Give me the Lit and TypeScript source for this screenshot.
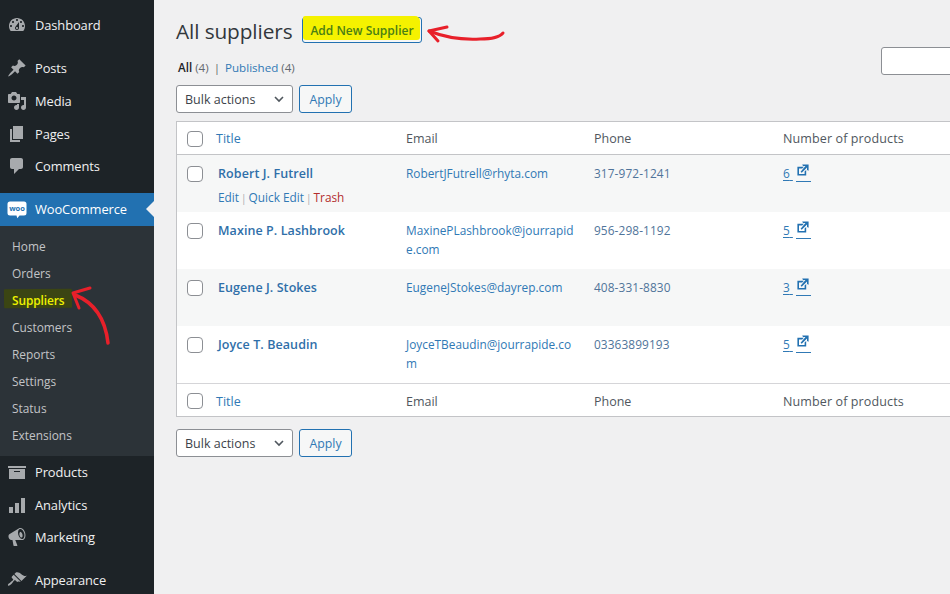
import { LitElement, html, css, svg } from "lit";
import { customElement } from "lit/decorators.js";

const ICONS: Record<string, string> = {
  dashboard: "M3.76 16h12.48c1.1-1.37 1.76-3.11 1.76-5 0-4.42-3.58-8-8-8s-8 3.58-8 8c0 1.89.66 3.63 1.76 5zM10 4c.55 0 1 .45 1 1s-.45 1-1 1-1-.45-1-1 .45-1 1-1zM6 6c.55 0 1 .45 1 1s-.45 1-1 1-1-.45-1-1 .45-1 1-1zm8 0c.55 0 1 .45 1 1s-.45 1-1 1-1-.45-1-1 .45-1 1-1zm-5.37 5.55L12 7v6c0 1.1-.9 2-2 2s-2-.9-2-2c0-.57.24-1.08.63-1.45zM4 10c.55 0 1 .45 1 1s-.45 1-1 1-1-.45-1-1 .45-1 1-1zm12 0c.55 0 1 .45 1 1s-.45 1-1 1-1-.45-1-1 .45-1 1-1zm-5 3c0-.55-.45-1-1-1s-1 .45-1 1 .45 1 1 1 1-.45 1-1z",
  posts: "M10.44 3.02l1.82-1.82 6.36 6.35-1.83 1.82c-1.05-.68-2.48-.57-3.41.36l-.75.75c-.92.93-1.04 2.35-.35 3.41l-1.83 1.82-2.41-2.41-2.8 2.79c-.42.42-3.38 2.71-3.8 2.29s1.86-3.39 2.28-3.81l2.79-2.79L4.1 9.36l1.83-1.82c1.05.69 2.48.57 3.4-.36l.75-.75c.93-.92 1.05-2.35.36-3.41z",
  media: "M13 11V4c0-.55-.45-1-1-1h-1.67L9 1H5L3.67 3H2c-.55 0-1 .45-1 1v7c0 .55.45 1 1 1h10c.55 0 1-.45 1-1zM7 4.5c1.38 0 2.5 1.12 2.5 2.5S8.38 9.5 7 9.5 4.5 8.38 4.5 7 5.62 4.5 7 4.5zM14 6h5v10.5c0 1.38-1.12 2.5-2.5 2.5S14 17.88 14 16.5s1.12-2.5 2.5-2.5c.17 0 .34.02.5.05V9h-3V6zm-4 8.05V13h2v3.5c0 1.38-1.12 2.5-2.5 2.5S7 17.88 7 16.5 8.12 14 9.5 14c.17 0 .34.02.5.05z",
  pages: "M6 15V2h10v13H6zm-1 1h8v2H3V5h2v11z",
  comments: "M5 2h9c1.1 0 2 .9 2 2v7c0 1.1-.9 2-2 2h-2l-5 5v-5H5c-1.1 0-2-.9-2-2V4c0-1.1.9-2 2-2z",
  products: "M19 4v2H1V4h18zM2 7h16v10H2V7zm11 3V9H7v1h6z",
  analytics: "M18 3v15h-4V3h4zm-6 5v10H8V8h4zM6 12v6H2v-6h4z",
  marketing: "M18.15 5.94c.46 1.62.38 3.22-.02 4.48-.42 1.28-1.26 2.18-2.3 2.48-.16.06-.26.06-.4.06-.06.02-.12.02-.18.02-.06.02-.14.02-.22.02h-6.8l2.22 5.5c.02.14-.06.26-.14.34-.08.1-.24.16-.34.16H6.95c-.1 0-.26-.06-.34-.16-.08-.08-.16-.2-.14-.34l-1-5.5H4.25l-.02-.02c-.5.06-1.08-.18-1.54-.62s-.88-1.08-1.06-1.88c-.24-.8-.2-1.56-.02-2.2.18-.62.58-1.08 1.06-1.3l.02-.02 9-5.4c.1-.06.18-.1.24-.16.06-.04.14-.08.24-.12.16-.08.28-.12.5-.18 1.04-.3 2.24.1 3.24.98s1.84 2.24 2.24 3.86zm-2.58 5.98h-.02c.4-.1.74-.34 1.04-.7.58-.7.86-1.76.86-3.04-.02-.64-.1-1.3-.28-1.98-.34-1.36-1.02-2.5-1.78-3.24s-1.68-1.1-2.46-.88c-.82.22-1.4.96-1.7 2-.32 1.04-.28 2.36.06 3.72.38 1.36 1 2.5 1.8 3.24.78.74 1.62 1.1 2.48.88zm-2.54-7.08c.22-.04.42-.02.62.04.38.16.76.48 1.12 1s.64 1.14.76 1.84c.14.7.1 1.34-.04 1.86-.14.5-.42.9-.88 1-.44.12-.9-.08-1.3-.56-.4-.46-.7-1.14-.86-1.96-.16-.8-.14-1.54.02-2.08.18-.56.48-.96.96-1.14z",
  appearance: "M14.48 11.06L7.41 3.99l1.5-1.5c.5-.56 2.3-.47 3.51.32 1.21.8 1.43 1.28 2.91 2.1 1.18.64 2.45 1.26 4.45.85zm-.71.71L6.7 4.7 4.93 6.47c-.39.39-.39 1.02 0 1.41l1.06 1.06c.39.39.39 1.03 0 1.42-.6.6-1.43 1.11-2.21 1.69-.35.26-.7.53-1.01.84C1.43 13.23.4 14.75 1.09 15.44c.69.7 2.21-.33 3.55-1.67.31-.31.58-.66.84-1.01.58-.78 1.09-1.61 1.69-2.21.39-.39 1.02-.39 1.41 0l1.06 1.06c.39.39 1.02.39 1.41 0z",
};

const icon = (k: string) => html`<svg class="ic" viewBox="0 0 20 20">${svg`<path d=${ICONS[k]} fill="currentColor"/>`}</svg>`;

const ext = html`<span class="extl"><svg class="ext" viewBox="0 0 20 20"><path fill="currentColor" d="M9 3h8v8l-2-1V6.92l-6.6 6.59-1.41-1.41L13.08 5H10zm3 12v-3l2-2v7H3V6h8L9 8H5v7h7z"/></svg></span>`;

interface Row { name: string; email: string; phone: string; n: number; actions?: boolean }
const ROWS: Row[] = [
  { name: "Robert J. Futrell", email: "RobertJFutrell@rhyta.com", phone: "317-972-1241", n: 6, actions: true },
  { name: "Maxine P. Lashbrook", email: "MaxinePLashbrook@jourrapide.com", phone: "956-298-1192", n: 5 },
  { name: "Eugene J. Stokes", email: "EugeneJStokes@dayrep.com", phone: "408-331-8830", n: 3 },
  { name: "Joyce T. Beaudin", email: "JoyceTBeaudin@jourrapide.com", phone: "03363899193", n: 5 },
];

@customElement("app-root")
export class AppRoot extends LitElement {
  static styles = css`
    :host { display: flex; width: 950px; height: 594px; overflow: hidden; position: relative; background: #f0f0f1; font-family: "Open Sans", "Noto Sans", sans-serif; font-size: 12.5px; color: #3c434a; }
    a { color: #3079b5; text-decoration: none; }

    .side { width: 154px; flex: none; background: #1d2327; padding-top: 8.5px; box-sizing: border-box; color: #f0f0f1; letter-spacing: -0.1px; }
    .item { height: 33px; display: flex; align-items: center; font-size: 12.9px; }
    .item.tight { height: 32.5px; }
    .item .ic { width: 20px; height: 20px; margin: 0 8px 0 7px; color: #a7aaad; flex: none; }
    .gap { height: 10px; }
    .item.cur { background: #2271b1; color: #fff; position: relative; }
    .item.cur::after { content: ""; position: absolute; right: 0; top: 50%; margin-top: -8px; border: 8px solid transparent; border-right-color: #f0f0f1; border-left-width: 0; }
    .woo { width: 20px; height: 20px; margin: 0 8px 0 7px; flex: none; }
    .sub { background: #2c3338; padding: 7px 0; }
    .sub div { height: 27px; line-height: 27px; padding-left: 12px; font-size: 11.9px; color: #c3c4c7; letter-spacing: 0; }
    .sub .on { color: #eef200; font-weight: 600; position: relative; letter-spacing: -.1px; }
    .sub .on span { position: relative; }
    .sub .on::before { content: ""; position: absolute; left: 4px; top: 2px; width: 68px; height: 19px; background: #3b4513; transform: rotate(-.6deg); border-radius: 1px; }

    .main { flex: 1; min-width: 0; padding: 0 0 0 22px; box-sizing: border-box; position: relative; }
    .head { display: flex; align-items: center; height: 26px; margin-top: 17px; gap: 9px; }
    h1 { margin: 0; font-size: 20.8px; font-weight: 400; color: #32373c; line-height: 28px; padding-top: 1px; letter-spacing: -0.1px; width: 117px; white-space: nowrap; }
    .add { box-sizing: border-box; width: 120px; height: 26px; border: 1px solid #2271b1; border-radius: 3px; display: flex; align-items: center; justify-content: center; background: #f6f7f7; color: #4a7f14; font-size: 12px; font-weight: 600; position: relative; padding: 1px 0 0 0; }
    .add span { position: relative; }
    .add::before { content: ""; position: absolute; left: 0; right: 1px; top: -2px; bottom: 2px; background: #f5f200; border-radius: 2px 5px 3px 3px; }
    .views { margin-top: 15px; height: 20px; line-height: 20px; font-size: 11.6px; color: #646970; padding-left: 2px; }
    .views b { color: #1d2327; font-weight: 600; }
    .views .sep { margin: 0 2px; }
    .nav { display: flex; gap: 6px; height: 28px; margin-top: 7px; }
    .nav.bot { margin-top: 12px; }
    .sel { box-sizing: border-box; width: 117px; height: 28px; background: #fff; border: 1px solid #8c8f94; border-radius: 3px; display: flex; align-items: center; justify-content: space-between; padding: 0 7px 0 8px; font-size: 12.5px; color: #3c434a; }
    .sel svg { width: 12px; height: 12px; }
    .apply { box-sizing: border-box; width: 53px; height: 28px; border: 1px solid #2271b1; border-radius: 3px; background: #f6f7f7; color: #3079b5; display: flex; align-items: center; justify-content: center; font-size: 12.3px; }
    .search { position: absolute; left: 727px; top: 47px; width: 100px; height: 28px; box-sizing: border-box; background: #fff; border: 1px solid #8c8f94; border-radius: 3px; }

    .wrap { margin-top: 8px; width: 800px; }
    table { border-collapse: separate; border-spacing: 0; table-layout: fixed; width: 800px; background: #fff; border: 1px solid #c3c4c7; box-sizing: border-box; }
    col.c0 { width: 30px; }
    col.c1 { width: 191px; }
    col.c2 { width: 188px; }
    col.c3 { width: 189px; }
    col.c4 { width: 200px; }
    th { font-weight: 400; text-align: left; padding: 0 8px; font-size: 12.5px; line-height: 18px; box-sizing: border-box; color: #50575e; }
    thead th { border-bottom: 1px solid #c3c4c7; height: 33px; padding-top: 2px; }
    tfoot th { border-top: 1px solid #d5d5d8; height: 33px; padding-top: 4px; }
    th.wide { letter-spacing: .12px; }
    th.cb, td.cb { padding-left: 10px; padding-right: 0; }
    thead th.cb { padding-top: 1px; }
    tfoot th.cb { padding-top: 2px; }
    td.cb { vertical-align: top; padding-top: 11px; }
    th.tt { padding-left: 9px; }
    td { height: 57px; box-sizing: border-box; vertical-align: top; padding: 9px 8px 0; font-size: 11.85px; line-height: 19px; overflow-wrap: break-word; word-break: break-all; color: #3079b5; }
    tbody tr:nth-child(odd) td { background: #f6f7f7; }
    td.nm { padding-left: 11px; }
    .name { font-size: 12.5px; font-weight: 600; color: #2f6fa9; display: block; line-height: 19px; word-break: normal; letter-spacing: .08px; }
    .acts { font-size: 11.85px; margin-top: 5px; line-height: 19px; word-break: normal; white-space: nowrap; color: #a7aaad; }
    .acts i { font-style: normal; margin: 0 2px; font-size: 10px; }
    .acts .del { color: #b32d2e; }
    .cbx { display: block; width: 16px; height: 16px; box-sizing: border-box; background: #fff; border: 1px solid #8c8f94; border-radius: 4px; }
    .phone { color: #50749a; letter-spacing: .1px; }
    .numc { display: flex; align-items: flex-start; word-break: normal; white-space: nowrap; }
    .num { text-decoration: underline; text-underline-offset: 2px; color: #3079b5; white-space: pre; }
    .extl { display: inline-flex; margin-left: 3px; height: 17px; width: 15px; justify-content: center; align-items: flex-start; border-bottom: 1px solid #3079b5; color: #2271b1; }
    .ext { width: 16px; height: 16px; flex: none; margin-top: -2px; }

    .over { position: absolute; left: 0; top: 0; pointer-events: none; }
  `;

  private nav(bot = false) {
    return html`<div class="nav ${bot ? "bot" : ""}">
      <div class="sel">Bulk actions<svg viewBox="0 0 12 12"><path d="M2 4l4 4 4-4" fill="none" stroke="#50575e" stroke-width="1.6"/></svg></div>
      <div class="apply">Apply</div>
    </div>`;
  }

  render() {
    const head = html`<tr>
      <th class="cb"><span class="cbx"></span></th>
      <th class="tt"><a>Title</a></th><th>Email</th><th>Phone</th><th class="wide">Number of products</th></tr>`;
    const foot = html`<tr>
      <th class="cb"><span class="cbx"></span></th>
      <th class="tt"><a>Title</a></th><th>Email</th><th>Phone</th><th class="wide">Number of products</th></tr>`;
    return html`
      <aside class="side">
        <div class="item">${icon("dashboard")}Dashboard</div>
        <div class="gap"></div>
        <div class="item">${icon("posts")}Posts</div>
        <div class="item">${icon("media")}Media</div>
        <div class="item tight">${icon("pages")}Pages</div>
        <div class="item tight">${icon("comments")}Comments</div>
        <div class="gap"></div>
        <div class="item cur">
          <svg class="woo" viewBox="0 0 20 20"><path fill="#fff" d="M3 2.500h14a2.500 2.500 0 0 1 2.500 2.500v9a2.500 2.500 0 0 1-2.500 2.500h-4.500l-2.200 2.800-.8-2.800H3A2.500 2.500 0 0 1 .5 14V5A2.500 2.500 0 0 1 3 2.500z"/><text x="10" y="12" font-size="7.500" font-weight="700" text-anchor="middle" fill="#2271b1" font-family="Open Sans">woo</text></svg>
          WooCommerce
        </div>
        <div class="sub">
          <div>Home</div><div>Orders</div><div class="on"><span>Suppliers</span></div><div>Customers</div><div>Reports</div><div>Settings</div><div>Status</div><div>Extensions</div>
        </div>
        <div class="item">${icon("products")}Products</div>
        <div class="item tight">${icon("analytics")}Analytics</div>
        <div class="item tight">${icon("marketing")}Marketing</div>
        <div class="gap"></div>
        <div class="item">${icon("appearance")}Appearance</div>
      </aside>
      <main class="main">
        <div class="head"><h1>All suppliers</h1><div class="add"><span>Add New Supplier</span></div></div>
        <div class="views"><b>All</b> (4) <span class="sep">|</span> <a>Published</a> (4)</div>
        ${this.nav()}
        <div class="search"></div>
        <div class="wrap">
          <table>
            <colgroup><col class="c0"/><col class="c1"/><col class="c2"/><col class="c3"/><col class="c4"/></colgroup>
            <thead>${head}</thead>
            <tbody>
              ${ROWS.map(r => html`<tr>
                <td class="cb"><span class="cbx"></span></td>
                <td class="nm"><a class="name">${r.name}</a>
                  ${r.actions ? html`<div class="acts"><a>Edit</a><i>|</i><a>Quick Edit</a><i>|</i><a class="del">Trash</a></div>` : ""}</td>
                <td>${r.email}</td>
                <td class="phone">${r.phone}</td>
                <td><div class="numc"><a class="num">${r.n}&nbsp;</a>${ext}</div></td>
              </tr>`)}
            </tbody>
            <tfoot>${foot}</tfoot>
          </table>
        </div>
        ${this.nav(true)}
      </main>
      <svg class="over" width="950" height="594" viewBox="0 0 950 594">
        <path d="M429 31 C444 37 462 40 480 39 C490 39 499 38 503 33" fill="none" stroke="#e8202a" stroke-width="3" stroke-linecap="round"/>
        <path d="M447 27 L429 31 L438 41" fill="none" stroke="#e8202a" stroke-width="3" stroke-linecap="round" stroke-linejoin="round"/>
        <path d="M108 343 C106 325 98 304 75 295" fill="none" stroke="#e8202a" stroke-width="3.500" stroke-linecap="round"/>
        <path d="M90 288 L73 293 L79 308" fill="none" stroke="#e8202a" stroke-width="3" stroke-linecap="round" stroke-linejoin="round"/>
      </svg>
    `;
  }
}
